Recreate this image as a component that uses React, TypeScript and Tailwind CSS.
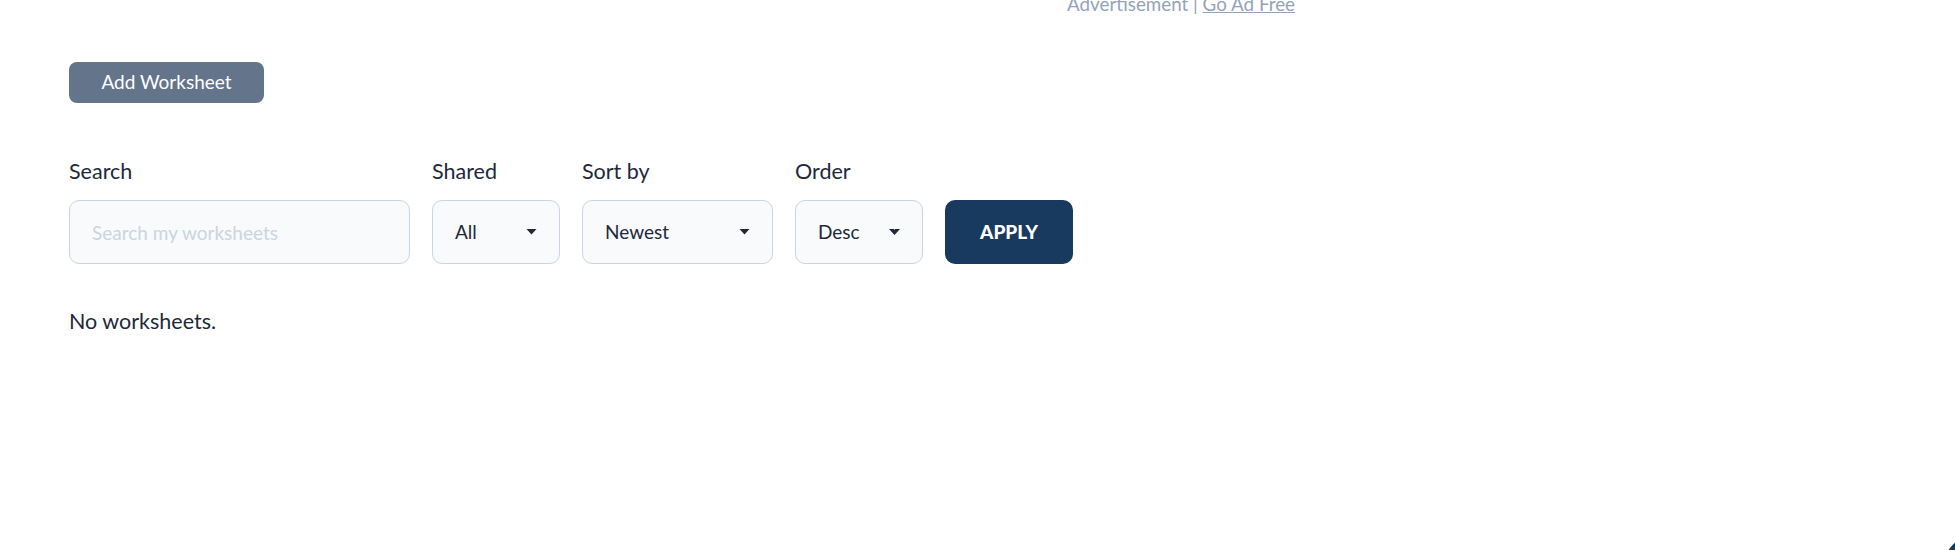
import React from 'react';

function Caret({ notched = false }: { notched?: boolean }) {
  return (
    <svg width="11" height="6" viewBox="0 0 11 6" className="shrink-0">
      {notched ? (
        <path d="M0 0 L5 0 L5.5 1.2 L6 0 L11 0 L5.5 6 Z" fill="#1f2937" />
      ) : (
        <path d="M0.5 0 L10.5 0 L5.5 5.5 Z" fill="#1f2937" />
      )}
    </svg>
  );
}

function SelectBox({
  label,
  value,
  width,
  notched,
}: {
  label: string;
  value: string;
  width: string;
  notched?: boolean;
}) {
  return (
    <div className="flex flex-col">
      <label className="text-[21.5px] leading-[24px] text-[#1e293b] mb-[17px]">{label}</label>
      <div
        className={`${width} h-[64px] flex items-center justify-between pl-[22px] pr-[22px] bg-[#f8fafc] border border-[#cbd5e1] rounded-[10px] text-[19px] text-[#1e293b]`}
      >
        <span>{value}</span>
        <Caret notched={notched} />
      </div>
    </div>
  );
}

export default function App() {
  return (
    <div
      className="relative w-[1955px] h-[550px] overflow-hidden bg-white"
      style={{ fontFamily: 'Lato, "Noto Sans", sans-serif' }}
    >
      {/* Ad strip */}
      <div className="ml-[407px] -mt-[7px] text-center text-[18.8px] leading-[22px] text-[#94a3b8]">
        Advertisement | <span className="underline">Go Ad Free</span>
      </div>

      <div className="px-[69px]">
        <button className="mt-[47px] w-[195px] h-[41px] rounded-[8px] bg-[#64748b] text-white text-[19px]">
          Add Worksheet
        </button>

        {/* Filters */}
        <div className="mt-[56px] flex items-end gap-[22px]">
          <div className="flex flex-col">
            <label className="text-[21.5px] leading-[24px] text-[#1e293b] mb-[17px]">Search</label>
            <input
              type="text"
              placeholder="Search my worksheets"
              className="w-[341px] h-[64px] px-[22px] bg-[#f8fafc] border border-[#cbd5e1] rounded-[10px] text-[19px] placeholder:text-[#cbd5e1] outline-none"
            />
          </div>
          <SelectBox label="Shared" value="All" width="w-[128px]" />
          <SelectBox label="Sort by" value="Newest" width="w-[191px]" />
          <SelectBox label="Order" value="Desc" width="w-[128px]" notched />
          <button className="w-[128px] h-[64px] rounded-[10px] bg-[#173a5e] text-white text-[19px] font-black">
            APPLY
          </button>
        </div>

        <p className="mt-[45px] text-[21.5px] leading-[24px] text-[#1e293b]">No worksheets.</p>
      </div>

      {/* Chat bubble, mostly off-screen */}
      <div className="absolute left-[1944px] top-[536px] w-[60px] h-[60px] rounded-full bg-[#173a5e]" />
    </div>
  );
}
